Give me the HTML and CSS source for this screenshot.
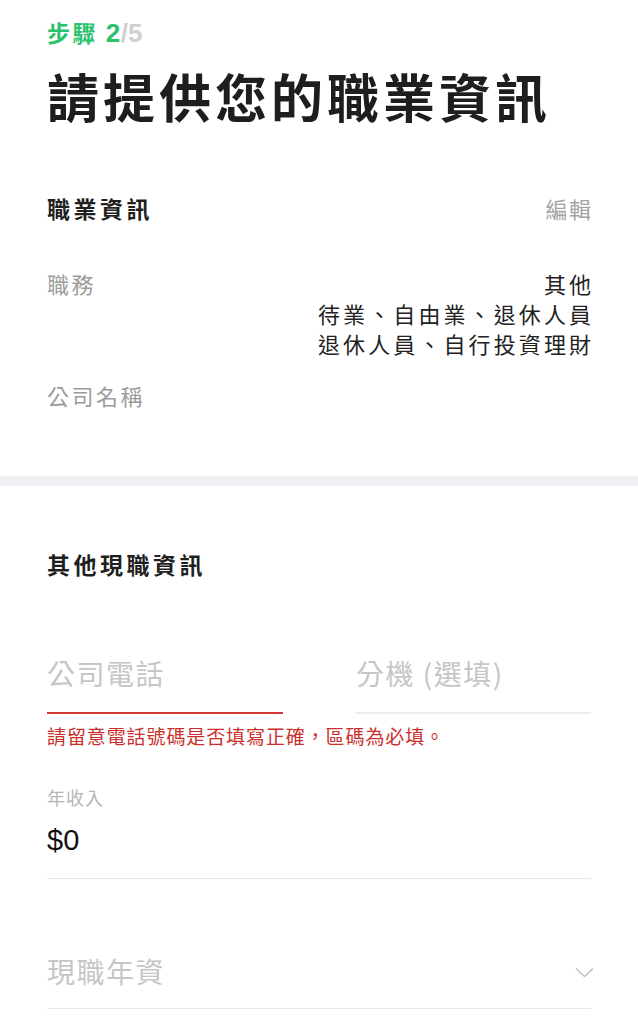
FILE: index.html
```html
<!DOCTYPE html>
<html lang="zh-Hant">
<head>
<meta charset="utf-8">
<title>職業資訊</title>
<link rel="stylesheet" href="styles.css">
</head>
<body>
<div class="page">
  <div class="wrap">
    <div class="step"><span class="step-cur">步驟 <span class="num">2</span></span><span class="step-total">/5</span></div>
    <h1 class="title">請提供您的職業資訊</h1>

    <div class="section-head">
      <h2 class="section-title">職業資訊</h2>
      <span class="edit">編輯</span>
    </div>

    <div class="info-row job-row">
      <span class="info-label">職務</span>
      <div class="info-value">
        <div>其他</div>
        <div>待業、自由業、退休人員</div>
        <div>退休人員、自行投資理財</div>
      </div>
    </div>

    <div class="info-row company-row">
      <span class="info-label">公司名稱</span>
    </div>
  </div>

  <div class="band"></div>

  <div class="wrap">
    <h2 class="section-title section2">其他現職資訊</h2>

    <div class="phone-grid">
      <div class="field field-error"><span class="placeholder">公司電話</span></div>
      <div class="field"><span class="placeholder">分機 (選填)</span></div>
    </div>
    <div class="error-msg">請留意電話號碼是否填寫正確，區碼為必填。</div>

    <div class="income">
      <div class="small-label">年收入</div>
      <div class="income-value">$0</div>
    </div>

    <div class="select">
      <span class="placeholder">現職年資</span>
      <svg class="chevron" width="19" height="11" viewBox="0 0 19 11" aria-hidden="true"><polyline points="1,1.5 9.5,9.5 18,1.5" fill="none" stroke="#c2c2c2" stroke-width="1.6"/></svg>
    </div>
  </div>
</div>
</body>
</html>
```

FILE: styles.css
```css
html, body {
  margin: 0;
  padding: 0;
  background: #ffffff;
}

body {
  font-family: "Noto Sans CJK TC", "Noto Sans", sans-serif;
  color: #1f1f1f;
}

.page {
  width: 638px;
}

.wrap {
  padding: 0 47px;
}

.step {
  margin-top: 17px;
  font-size: 23px;
  line-height: 30px;
  font-weight: 700;
  letter-spacing: 2.5px;
}

.step-cur {
  color: #2bc26d;
}

.num, .step-total {
  font-family: "Liberation Sans", "Noto Sans CJK TC", sans-serif;
  font-weight: 700;
  font-size: 26px;
}

.num {
  letter-spacing: 0.5px;
}

.step-total {
  color: #cfcfcf;
  letter-spacing: 0;
}

.title {
  margin: 16px 0 0;
  font-size: 52px;
  line-height: 64px;
  font-weight: 700;
  letter-spacing: 4px;
  color: #1e1e1e;
  white-space: nowrap;
}

.section-head {
  margin-top: 64px;
  display: flex;
  justify-content: space-between;
  align-items: center;
}

.section-title {
  margin: 0;
  font-size: 23px;
  line-height: 32px;
  font-weight: 700;
  letter-spacing: 3.5px;
  color: #1f1f1f;
}

.edit {
  font-size: 22px;
  line-height: 32px;
  color: #a3a3a3;
  letter-spacing: 1.5px;
  margin-right: -1.5px;
}

.info-row {
  display: flex;
  justify-content: space-between;
  align-items: flex-start;
}

.job-row {
  margin-top: 44px;
}

.company-row {
  margin-top: 22px;
}

.info-label {
  font-size: 22px;
  line-height: 30px;
  color: #9c9c9c;
  letter-spacing: 2.5px;
}

.info-value {
  text-align: right;
  font-size: 22px;
  line-height: 30px;
  color: #222222;
  letter-spacing: 3.1px;
  margin-right: -3.1px;
}

.band {
  margin-top: 66px;
  height: 10px;
  background: #eff1f4;
}

.section2 {
  margin-top: 62px;
}

.phone-grid {
  margin-top: 73px;
  display: grid;
  grid-template-columns: 236px 235px;
  column-gap: 73px;
}

.field {
  padding-bottom: 19px;
  border-bottom: 2px solid #ececec;
}

.field-error {
  border-bottom-color: #d23a35;
}

.placeholder {
  display: block;
  font-size: 28px;
  line-height: 40px;
  color: #c6c6c6;
  letter-spacing: 1.5px;
}

.error-msg {
  margin-top: 10px;
  font-size: 19px;
  line-height: 24px;
  color: #c9302c;
  letter-spacing: 0.9px;
  white-space: nowrap;
}

.income {
  margin-top: 37px;
  padding-bottom: 20px;
  border-bottom: 1.5px solid #e8e8e8;
}

.small-label {
  font-size: 18px;
  line-height: 24px;
  color: #b5b5b5;
  letter-spacing: 1px;
}

.income-value {
  margin-top: 13px;
  font-family: "Liberation Sans", "Noto Sans CJK TC", sans-serif;
  font-size: 29px;
  line-height: 36px;
  color: #111111;
}

.select {
  margin-top: 72px;
  padding-bottom: 17px;
  border-bottom: 1.5px solid #e8e8e8;
  display: flex;
  justify-content: space-between;
  align-items: center;
}

.chevron {
  display: block;
  margin-right: -3px;
  margin-top: 2px;
}
```
